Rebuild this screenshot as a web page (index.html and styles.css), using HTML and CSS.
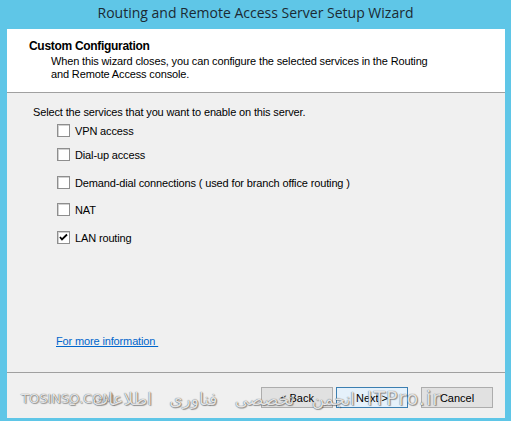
FILE: index.html
```html
<!DOCTYPE html>
<html lang="en">
<head>
  <meta charset="UTF-8" />
  <title>Routing and Remote Access Server Setup Wizard</title>
  <meta name="viewport" content="width=device-width, initial-scale=1.0" />
  <link rel="stylesheet" href="styles.css">
</head>
<body>

  <div class="window">
    <div class="titlebar">Routing and Remote Access Server Setup Wizard</div>

    <div class="dialog">
      <header class="header">
        <h1>Custom Configuration</h1>
        <p>When this wizard closes, you can configure the selected services in the Routing<br>and Remote Access console.</p>
      </header>

      <main class="content">
        <p class="intro">Select the services that you want to enable on this server.</p>

        <ul class="options">
          <li><span class="check"></span>VPN access</li>
          <li><span class="check"></span>Dial-up access</li>
          <li><span class="check"></span>Demand-dial connections ( used for branch office routing )</li>
          <li><span class="check"></span>NAT</li>
          <li>
            <span class="check is-checked">
              <svg viewBox="0 0 11 11" width="11" height="11"><path d="M2 5 L4 7.5 L9 2.5" fill="none" stroke="#000" stroke-width="1.8"/></svg>
            </span>LAN routing
          </li>
        </ul>

        <a class="more" href="#">For more information&nbsp;</a>
      </main>

      <footer class="footer">
        <button type="button">&lt; Back</button>
        <button type="button" class="is-default">Next &gt;</button>
        <button type="button" class="cancel">Cancel</button>

        <span class="mark mark-left">TOSINSO.COM</span>
        <span class="mark mark-right">
          <span class="mark-fa" dir="rtl" lang="fa">انجمن تخصصی فناوری اطلاعات ـ</span>
          <span class="mark-site">ITPro.ir</span>
        </span>
      </footer>
    </div>
  </div>

</body>
</html>
```

FILE: styles.css
```css
* {
  box-sizing: border-box;
}

body {
  margin: 0;
  background: #5fc6e7;
  font-family: "Liberation Sans", Arial, sans-serif;
  font-size: 11px;
  letter-spacing: -0.14px;
  color: #000;
}

.window {
  display: flex;
  flex-direction: column;
  height: 421px;
}

.titlebar {
  height: 29px;
  padding-top: 3px;
  text-align: center;
  font-family: "Open Sans", "Noto Sans", sans-serif;
  font-size: 14px;
  letter-spacing: 0;
  color: #1b2a33;
}

.dialog {
  position: relative;
  display: flex;
  flex-direction: column;
  flex: 1;
  margin: 0 6px 3px 7px;
  background: #f0f0f0;
}

.header {
  height: 64px;
  padding: 10px 0 0 22px;
  background: #fff;
  border-bottom: 1px solid #a0a0a0;

  h1 {
    margin: 0 0 2px;
    font-size: 12px;
    font-weight: 700;
    letter-spacing: -0.3px;
  }

  p {
    margin: 0;
    padding-left: 22px;
    line-height: 13px;
  }
}

.content {
  flex: 1;
  padding: 13px 0 0 26px;

  .intro {
    margin: 0;
  }
}

.options {
  list-style: none;
  margin: 6px 0 0 24px;
  padding: 0;

  li {
    display: flex;
    align-items: center;
    gap: 5px;
    height: 13px;
  }

  li + li {
    margin-top: 15px;
  }

  li:nth-child(2) {
    margin-top: 11px;
  }

  li:nth-child(4) {
    margin-top: 14px;
  }
}

.check {
  display: grid;
  place-items: center;
  width: 13px;
  height: 13px;
  background: #fff;
  border: 1px solid #8e8e8e;
  box-shadow: inset 1px 1px 0 #d0d0d0;
}

.more {
  display: inline-block;
  margin: 91px 0 0 23px;
  color: #0066cc;
}

.footer {
  display: flex;
  height: 46px;
  padding: 14px 12px 0 0;
  border-top: 1px solid #a0a0a0;
  justify-content: flex-end;
  gap: 3px;

  button {
    width: 72px;
    height: 21px;
    padding: 0;
    font: inherit;
    color: #000;
    background: #e1e1e1;
    border: 1px solid #adadad;
  }

  .is-default {
    border-color: #3c7fb1;
    background: #e5f1fb;
  }

  .cancel {
    margin-left: 10px;
  }
}

.mark {
  position: absolute;
  pointer-events: none;
  font-family: "DejaVu Sans", sans-serif;
  letter-spacing: 0;
  color: rgba(255, 255, 255, 0.85);
  text-shadow: 0 0 1px #3a3a3a, 1px 1px 1px rgba(0, 0, 0, 0.35);
}

.mark-left {
  left: 14px;
  bottom: 12px;
  font-size: 13px;
}

.mark-right {
  display: flex;
  align-items: baseline;
  gap: 12px;
  right: 64px;
  bottom: 9px;
}

.mark-fa {
  font-size: 17px;
  word-spacing: 12px;
}

.mark-site {
  font-size: 19px;
  letter-spacing: 1px;
}
```
